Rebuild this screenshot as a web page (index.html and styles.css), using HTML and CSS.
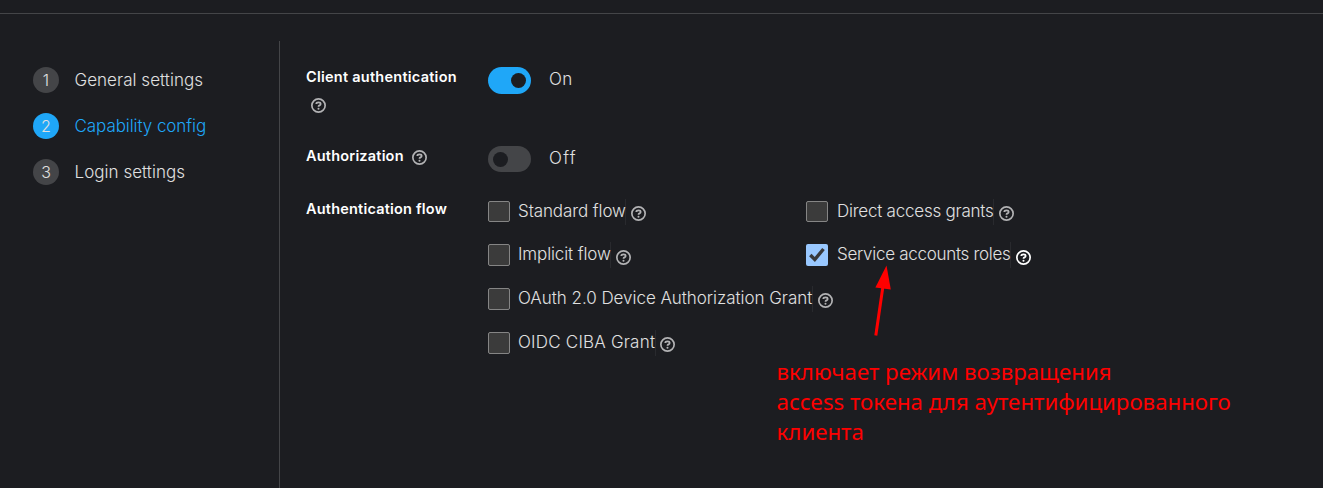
FILE: index.html
```html
<!DOCTYPE html>
<html lang="en">
<head>
<meta charset="utf-8">
<title>Create client</title>
<link rel="stylesheet" href="styles.css">
</head>
<body>
<svg class="defs" width="0" height="0" aria-hidden="true">
  <symbol id="help" viewBox="0 0 16 16">
    <circle cx="8" cy="8" r="7.1" fill="none" stroke="currentColor" stroke-width="1.8"/>
    <path d="M5.6 6.4Q5.8 4.7 8 4.7Q10.3 4.7 10.3 6.4Q10.3 7.3 9.1 7.9Q8 8.3 8 9.4" fill="none" stroke="currentColor" stroke-width="1.9"/>
    <circle cx="8" cy="11.4" r="1.1" fill="currentColor"/>
  </symbol>
</svg>
<div class="page">
  <div class="top"></div>
  <div class="wizard">
    <nav class="steps">
      <div class="step"><span class="num">1</span><span class="general">General settings</span></div>
      <div class="step current"><span class="num">2</span><span class="capability">Capability config</span></div>
      <div class="step"><span class="num">3</span><span class="login">Login settings</span></div>
    </nav>
    <main class="form">
      <div class="row client">
        <div class="label"><span class="l-client">Client authentication</span><svg class="help"><use href="#help"/></svg></div>
        <div class="switch on"><i></i></div><span class="state">On</span>
      </div>
      <div class="row authz">
        <div class="label"><span class="l-authz">Authorization</span><svg class="help"><use href="#help"/></svg></div>
        <div class="switch"><i></i></div><span class="state">Off</span>
      </div>
      <div class="row">
        <div class="label"><span class="l-flow">Authentication flow</span></div>
        <div class="flows">
          <div class="option first"><span class="box"></span><span class="name standard">Standard flow</span><svg class="help"><use href="#help"/></svg></div>
          <div class="option first"><span class="box"></span><span class="name direct">Direct access grants</span><svg class="help"><use href="#help"/></svg></div>
          <div class="option second"><span class="box"></span><span class="name implicit">Implicit flow</span><svg class="help"><use href="#help"/></svg></div>
          <div class="option second"><span class="box checked"><svg viewBox="0 0 22 22"><path d="M4.3 11L8.8 15.5L17.5 5" fill="none" stroke="#38393b" stroke-width="3.4"/></svg></span><span class="name service">Service accounts roles</span><svg class="help bright"><use href="#help"/></svg></div>
          <div class="option wide"><span class="box"></span><span class="name oauth">OAuth 2.0 Device Authorization Grant</span><svg class="help"><use href="#help"/></svg></div>
          <div class="option wide"><span class="box"></span><span class="name ciba">OIDC CIBA Grant</span><svg class="help"><use href="#help"/></svg></div>
        </div>
      </div>
    </main>
  </div>
  <svg class="arrow" viewBox="0 0 20 74"><path d="M3.8 71.5L11 22" stroke="#f00" stroke-width="3"/><path d="M14.5 1.5L3.4 23.5L18.8 25.5Z" fill="#f00"/></svg>
  <div class="note">включает режим возвращения<br>access токена для аутентифицированного<br>клиента</div>
</div>
</body>
</html>
```
FILE: styles.css
```css
* { box-sizing: border-box; }
body { margin: 0; background: #1c1d21; color: #e0e0e0; font: 300 17px/26px Inter, sans-serif; }
.defs { position: absolute; }
.page { position: relative; width: 1323px; height: 488px; overflow: hidden; white-space: nowrap; }
.top { height: 14px; border-bottom: 1px solid #444548; }
.wizard { display: flex; height: 474px; padding-top: 27px; }
.steps { width: 280px; border-right: 1px solid #444548; padding: 26px 0 0 33px; display: flex; flex-direction: column; gap: 20px; }
.step { display: flex; gap: 15.5px; height: 26px; }
.num { width: 26px; height: 26px; border-radius: 50%; background: #444548; text-align: center; font-size: 16px; line-height: 26px; }
.general { letter-spacing: .04px; }
.capability { letter-spacing: -.08px; }
.login { letter-spacing: .04px; }
.current { color: #1fa7f8; }
.current .num { background: #1fa7f8; color: #e0e0e0; }
.form { padding: 24px 0 0 26px; }
.row { display: flex; }
.client { height: 79px; }
.authz { height: 53px; }
.label { width: 182px; font-weight: 600; font-size: 14.5px; line-height: 24px; color: #fff; }
.l-client { letter-spacing: .25px; }
.l-authz { letter-spacing: .2px; }
.l-flow { letter-spacing: .2px; }
.help { width: 15px; height: 15px; color: #b2b2b4; flex: none; }
.client .help { display: block; margin: 9px 0 0 5px; }
.authz .help { margin-left: 8px; vertical-align: -4px; }
.switch { width: 43px; height: 27px; margin-top: 2px; border-radius: 14px; background: #444548; padding: 6px 5px; }
.switch i { display: block; width: 15px; height: 15px; border-radius: 50%; background: #1c1d21; }
.on { background: #1fa7f8; padding-left: 22.5px; }
.authz .switch { height: 26px; }
.state { margin-left: 18px; line-height: 29px; }
.client .state { letter-spacing: .3px; }
.authz .state { letter-spacing: 1.3px; }
.flows { display: grid; grid-template-columns: 318px 240px; grid-auto-rows: 43.67px; }
.option { display: flex; height: 26px; margin-top: 2px; }
.second { margin-top: 1px; }
.wide { grid-column: 1 / 3; }
.box { width: 22px; height: 22px; margin: 2px 8px 0 0; border: 1px solid #858585; border-radius: 2px; background: #3b3b3b; flex: none; }
.first .box { height: 21px; }
.checked { border: 0; background: #99c8ff; }
.checked svg { display: block; width: 22px; height: 22px; }
.name { border-right: 1px solid #292a2e; line-height: 25px; }
.option .help { margin: 7px 0 0 5px; }
.second .help { margin-top: 8px; }
.option .bright { color: #fff; }
.standard { width: 108px; letter-spacing: -.1px; }
.direct { width: 157px; margin-left: 1px; letter-spacing: -.23px; }
.implicit { width: 93px; letter-spacing: -.12px; }
.service { width: 174px; margin-left: 1px; letter-spacing: -.29px; }
.oauth { width: 295px; letter-spacing: -.04px; }
.ciba { width: 138px; letter-spacing: .21px; }
.ciba + .help { margin-left: 4px; }
.arrow { position: absolute; left: 872px; top: 264px; width: 20px; height: 74px; }
.note { position: absolute; left: 776.5px; top: 357px; color: #f00; font: 400 22.25px/30px "Noto Sans", sans-serif; }
```
